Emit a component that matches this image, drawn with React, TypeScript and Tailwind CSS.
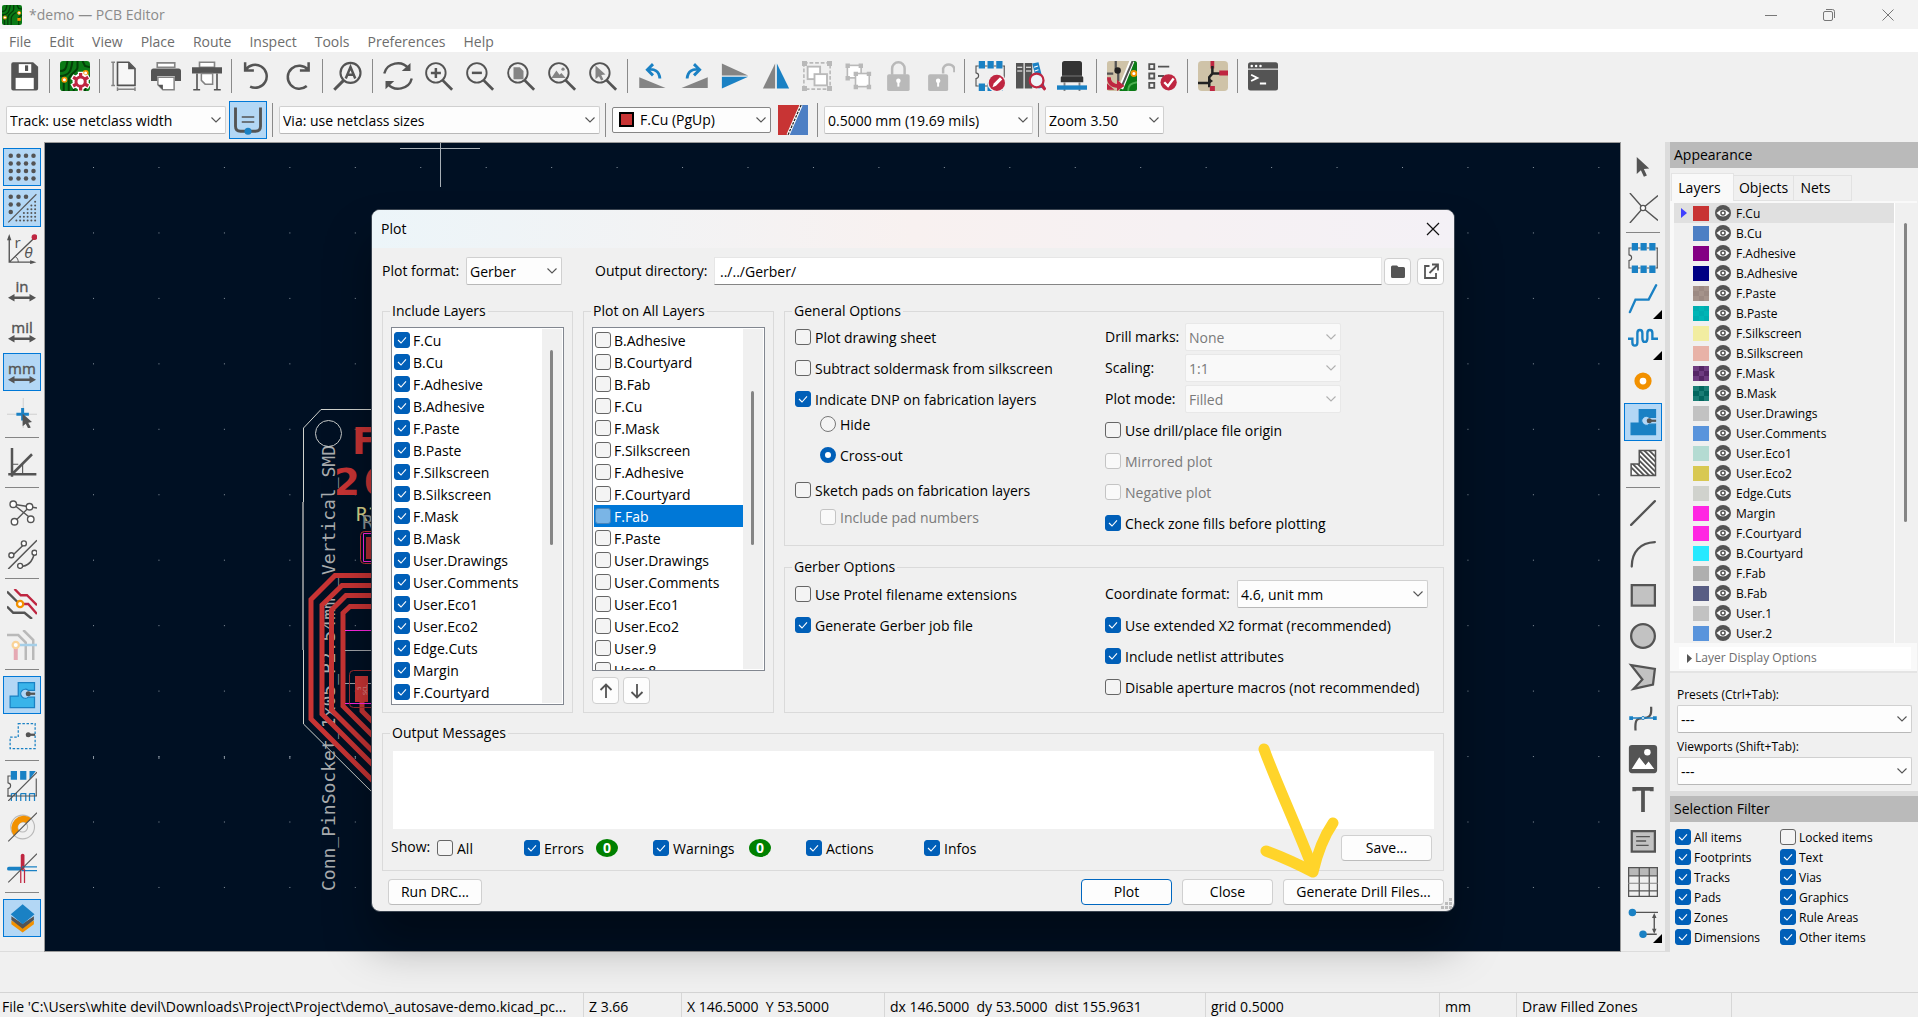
import React, { useId, useState } from "react";

const D = "#545454";
const G = "#848484";
const L = "#b9b9b9";
const B = "#1a81c4";
const R = "#bf2641";
const O = "#f29100";

/* ---------- shared controls ---------- */

function Icon({ children, size = "size-[30px]" }: { children: React.ReactNode; size?: string }) {
  return (
    <svg viewBox="0 0 24 24" className={`${size} shrink-0`} fill="none" aria-hidden="true">
      {children}
    </svg>
  );
}

function Chevron({ muted = false }: { muted?: boolean }) {
  return (
    <svg viewBox="0 0 10 6" className="pointer-events-none absolute top-1/2 right-[5px] h-[6px] w-[10px] -translate-y-1/2" aria-hidden="true">
      <path d="M0.5 0.5 5 5 9.5 0.5" fill="none" stroke={muted ? "#b0b0b0" : "#555"} strokeWidth="1.1" />
    </svg>
  );
}

function Combo({
  value,
  label,
  id,
  width = "w-full",
  swatch,
  disabled,
}: {
  value: string;
  label?: string;
  id?: string;
  width?: string;
  swatch?: boolean;
  disabled?: boolean;
}) {
  return (
    <span className={`relative inline-block shrink-0 ${width}`}>
      <select
        id={id}
        aria-label={label}
        disabled={disabled}
        className={`block w-full appearance-none rounded-[2px] border pr-6 text-[14px] leading-5 outline-none ${
          disabled ? "border-[#e8e8e8] bg-[#f9f9f9] text-[#7a7a7a] opacity-100" : swatch ? "border-[#868686] bg-[#fdfdfd] text-black" : "border-[#d0d0d0] border-b-[#b8b8b8] bg-[#fdfdfd] text-black"
        } ${swatch ? "h-[26px] pl-[27px]" : "h-[28px] pt-[2px] pl-[3px]"}`}
      >
        <option>{value}</option>
      </select>
      {swatch && <span className="pointer-events-none absolute top-[5px] left-[7px] size-[15px] border-2 border-black bg-[#c83434]" />}
      <Chevron muted={disabled} />
    </span>
  );
}

function Check({
  label,
  checked = false,
  disabled = false,
  selected = false,
  gap = "gap-[4px]",
  className = "",
}: {
  label: string;
  checked?: boolean;
  disabled?: boolean;
  selected?: boolean;
  gap?: string;
  className?: string;
}) {
  const tone = selected ? "border-[#4a86bd] bg-[#7ab5e6]" : disabled ? "border-[#c4c4c4] bg-[#f9f9f9]" : "border-[#666] bg-[#f4f4f4] checked:border-[#005fb8] checked:bg-[#005fb8]";
  return (
    <label className={`flex items-center whitespace-nowrap ${gap} ${disabled ? "text-[#7a7a7a]" : ""} ${className}`}>
      <span className="relative flex shrink-0">
        <input type="checkbox" defaultChecked={checked} disabled={disabled} className={`peer size-[16px] appearance-none rounded-[3px] border ${tone}`} />
        <svg viewBox="0 0 16 16" className="pointer-events-none absolute inset-0 hidden size-[16px] peer-checked:block" aria-hidden="true">
          <path d="M4 8 7 11 12 5.4" fill="none" stroke="#fff" strokeWidth="1.1" />
        </svg>
      </span>
      <span className="pt-[2px]">{label}</span>
    </label>
  );
}

function Radio({ label, checked, onSelect }: { label: string; checked: boolean; onSelect: () => void }) {
  return (
    <label className="flex h-[20px] items-center gap-[4px]">
      <input
        type="radio"
        name="dnp"
        checked={checked}
        onChange={onSelect}
        className={`size-[16px] appearance-none rounded-full ${checked ? "border-[5px] border-[#005fb8] bg-white" : "border border-[#777] bg-[#f4f4f4]"}`}
      />
      <span className="pt-[2px]">{label}</span>
    </label>
  );
}

function PushButton({ children, width, primary = false }: { children: React.ReactNode; width: string; primary?: boolean }) {
  return (
    <button
      type="button"
      className={`flex h-[26px] items-center justify-center rounded-[4px] border bg-[#fdfdfd] text-[14px] leading-5 ${width} ${primary ? "border-[#0067c0]" : "border-[#d0d0d0] border-b-[#bcbcbc]"}`}
    >
      {children}
    </button>
  );
}

/* ---------- icon drawings on a 24 unit grid ---------- */

const Footprint = () => (
  <>
    <path d="M3 4H.8v5.5C3.6 10 3.6 13.500 .8 14v6H3M23.400 4V20" stroke={D} strokeWidth=".9" />
    <path d="M3 0h5v6H3zM10 0h5v6h-5zM17 0h5v6h-5zM3 18h5v6H3zM10 18h5v6h-5zM17 18h5v6h-5z" fill={B} />
    <path d="M8 4h2M15 4h2M22 4h2M8 20h2M15 20h2M22 20h2" stroke={D} strokeWidth=".9" />
  </>
);

const Lens = () => (
  <>
    <circle cx="9.500" cy="9.500" r="7.800" stroke={D} strokeWidth="1.500" />
    <path d="M15 15.500 22.500 23" stroke={D} strokeWidth="2.200" />
  </>
);

const Circuit = () => (
  <>
    <rect x="0" y="0" width="24" height="24" rx="2.500" fill="#0b7a16" />
    <path d="M0 8c5 0 5-3 6-8M0 12c8 0 9-5 10-12M14 0v5c0 4-7 5-7 10v9M17 9c-4 2-6 4-6 8v7M24 12l-4 3v9M18 0l2 4 4 1M3 17v7" stroke="#043f08" strokeWidth="1.600" />
    <circle cx="3.500" cy="15" r="1.800" fill="#fff" stroke={O} strokeWidth="1.200" />
    <circle cx="20.500" cy="9.500" r="1.800" fill="#fff" stroke={O} strokeWidth="1.200" />
    <rect x="18.500" y="15.500" width="4" height="3.500" fill={O} />
  </>
);

const DoubleArrow = () => (
  <path d="M.8 18.200 6 15.200v2h12v-2l5.200 3-5.200 3v-2H6v2z" fill={D} />
);

const Unit = ({ text }: { text: string }) => (
  <>
    <text x="12" y="13.200" textAnchor="middle" fontSize="12" fontFamily="Open Sans, sans-serif" fill={D} stroke={D} strokeWidth=".3">
      {text}
    </text>
    <DoubleArrow />
  </>
);

const bigDots = [3, 9.200, 15.200, 21.200];
const Dot = ({ x, y, r = 1.800, c = D }: { x: number; y: number; r?: number; c?: string }) => <circle cx={x} cy={y} r={r} fill={c} />;

const PadLocks = ({ open = false }: { open?: boolean }) => (
  <>
    <rect x="2.500" y="10.500" width={open ? 16 : 18} height="13.500" rx="1.500" fill={L} />
    {open ? <path d="M14.500 10V6a4.800 4.800 0 0 1 9 0v3" stroke={L} strokeWidth="2" /> : <path d="M6.500 11V6a5 5 0 0 1 10 0v5" stroke={L} strokeWidth="2" />}
    <circle cx={open ? 10.500 : 11.500} cy="15.800" r="1.800" fill="#fff" />
    <path d={open ? "M10.500 16v4.500" : "M11.500 16v4.500"} stroke="#fff" strokeWidth="1.600" />
  </>
);

const Zone = ({ fill, stroke, dash }: { fill: string; stroke: string; dash?: boolean }) => (
  <>
    <path
      d={dash ? "M9 2h13.500v20H2.500V12.800H9z" : "M9 2h13v6.300h-5a3.600 3.600 0 1 0 0 5.400h5V22H2.500V12.800H9z"}
      fill={fill}
      stroke={stroke}
      strokeWidth="1"
      strokeDasharray={dash ? "2 1.300" : undefined}
    />
    <circle cx="17" cy="11" r="2" fill={D} />
    <path d="M17 11h5.500" stroke={D} strokeWidth="1.800" />
  </>
);

const icons: Record<string, React.ReactNode> = {
  save: (
    <>
      <path d="M2.500 1h16L22.500 4.500V22a1.500 1.500 0 0 1-1.500 1.500H2.500A1.500 1.500 0 0 1 1 22V2.500A1.500 1.500 0 0 1 2.500 1z" fill={D} />
      <path d="M7 2.500h10v7H7z" fill="#fff" />
      <path d="M12 3.500h2.500v4.500H12z" fill={D} />
      <path d="M4.500 13.500h14.500v9H4.500z" fill="#fff" />
    </>
  ),
  setup: (
    <>
      <Circuit />
      <path d="M16.500 8.500v16M9.500 12.500l14 8M9.500 20.500l14-8" stroke="#fff" strokeWidth="4.500" />
      <circle cx="16.500" cy="16.500" r="6.500" fill="#fff" />
      <path d="M16.500 9.500v3M16.500 20.500v3M10.500 13l2.600 1.500M20 18.500l2.600 1.500M10.500 20l2.600-1.500M20 14.500l2.600-1.500" stroke={R} strokeWidth="2.600" />
      <circle cx="16.500" cy="16.500" r="3.700" fill="#fff" stroke={R} strokeWidth="2.400" />
    </>
  ),
  page: (
    <>
      <path d="M6 1h9l5 5v13.500H6z" stroke={D} strokeWidth="1.300" fill="#f7f7f7" />
      <path d="M14.500 1v5.500H20z" fill={D} />
      <path d="M1 1h3M1 19.500h3M2.500 1v18.500M6 22.500h14M6 21v3M20 21v3" stroke={G} strokeWidth="1.200" />
    </>
  ),
  print: (
    <>
      <path d="M5 1.500h14v3.500H5z" stroke={G} strokeWidth="1.300" fill="#fff" />
      <path d="M0 8a2 2 0 0 1 2-2h20a2 2 0 0 1 2 2v8h-5v-4H5v4H0z" fill={D} />
      <path d="M5.500 13h13v10h-9l-4-4z" stroke={G} strokeWidth="1.200" fill="#fff" />
      <path d="M5.500 19h4v4z" fill={D} />
    </>
  ),
  plot: (
    <>
      <path d="M6 1h12v4H6z" stroke={G} strokeWidth="1.300" fill="#fff" />
      <path d="M0 5h24v5H0z" fill={D} />
      <path d="M4 10v13M20 10v13M1 23h5.500M17.500 23H23" stroke={D} strokeWidth="1.300" />
      <path d="M7.500 10h9v8.500h-6l-3-3z" stroke={G} strokeWidth="1.200" fill="#fff" />
    </>
  ),
  undo: <path d="M2.500 1v6.500h7M3 7a9.200 9.200 0 1 1 3.500 13.500" stroke={D} strokeWidth="2" />,
  redo: <path d="M20.500 1v6.500h-7M20 7a9.200 9.200 0 1 0-1 13" stroke={D} strokeWidth="2" />,
  find: (
    <>
      <circle cx="14" cy="9.500" r="8" stroke={D} strokeWidth="1.700" />
      <path d="M8.500 15.500 1 23" stroke={D} strokeWidth="2.400" />
      <path d="M10.200 14 14 4.800 17.800 14M11.500 11h5" stroke={D} strokeWidth="2" />
    </>
  ),
  refresh: (
    <>
      <path d="M1 10A11 10.500 0 0 1 20.500 6M23 14A11 10.500 0 0 1 3.500 18" stroke={D} strokeWidth="1.900" />
      <path d="M22 1.500V8h-7zM2 22.500V16h7z" fill={D} />
    </>
  ),
  zoomin: (
    <>
      <Lens />
      <path d="M9.500 5.500v8M5.500 9.500h8" stroke={D} strokeWidth="2" />
    </>
  ),
  zoomout: (
    <>
      <Lens />
      <path d="M5.500 9.500h8" stroke={D} strokeWidth="2" />
    </>
  ),
  zoompage: (
    <>
      <Lens />
      <path d="M6 5h5l3 3v6.500H6z" fill={G} />
    </>
  ),
  zoomobj: (
    <>
      <Lens />
      <path d="M3.500 13.500 7.500 7.500 10 11l1.500-1.500 3.500 4z" fill={G} />
      <circle cx="12.800" cy="6.500" r="1.300" fill={G} />
    </>
  ),
  zoomsel: (
    <>
      <Lens />
      <path d="M6 3.500v11l2.700-2.300 1.800 3.300 1.800-.8-1.700-3.500 3.400-.4z" fill={G} />
    </>
  ),
  rotl: (
    <>
      <path d="M1 13v8.500h21z" fill={G} />
      <path d="M8 7c5-1 9 1 9.500 7M12 2.500 7.500 7l4.500 4.500" stroke={B} strokeWidth="2.300" />
    </>
  ),
  rotr: (
    <>
      <path d="M23 13v8.500H2z" fill={G} />
      <path d="M16 7c-5-1-9 1-9.500 7M12 2.500 16.500 7 12 11.500" stroke={B} strokeWidth="2.300" />
    </>
  ),
  flipv: (
    <>
      <path d="M1.500 2v9.500h21z" fill={G} />
      <path d="M1.500 22v-9.500h21z" fill={B} />
    </>
  ),
  fliph: (
    <>
      <path d="M11.300 2v20H1.500z" fill={G} />
      <path d="M12.700 2v20h9.800z" fill={B} />
    </>
  ),
  group: (
    <>
      <rect x="1.500" y="1.500" width="21" height="21" stroke={L} strokeWidth="1.300" strokeDasharray="3 1.500" />
      <path d="M0 0h4v4H0zM20 0h4v4h-4zM0 20h4v4H0zM20 20h4v4h-4z" fill={L} />
      <rect x="4.500" y="4.500" width="10" height="10" fill="#fff" stroke={L} strokeWidth="1.500" />
      <rect x="10" y="10.500" width="10" height="9" fill="#fff" stroke={L} strokeWidth="1.500" />
    </>
  ),
  ungroup: (
    <>
      <rect x="3.500" y="3.500" width="11" height="10" stroke={L} strokeWidth="1.300" fill="#fff" />
      <rect x="10" y="10" width="11" height="10.500" stroke={L} strokeWidth="1.300" fill="#fff" />
      <path d="M2 2h3.500v3.500H2zM12.500 2H16v3.500h-3.500zM2 12h3.500v3.500H2zM8.500 8.500H12V12H8.500zM19 8.500h3.500V12H19zM8.500 19H12v3.500H8.500zM19 19h3.500v3.500H19z" fill={L} />
    </>
  ),
  lock: <PadLocks />,
  unlock: <PadLocks open />,
  fpedit: (
    <>
      <Footprint />
      <circle cx="17.500" cy="17.500" r="7.500" fill="#f0f0f0" />
      <circle cx="17.500" cy="17.500" r="6.500" fill={R} />
      <path d="m14 21 1-3 5-5 1.800 1.800-5 5z" fill="#fff" />
    </>
  ),
  fplib: (
    <>
      <path d="M0 1.500h6V22H0zM7 1.500h6V22H7z" fill={D} />
      <path d="m13 2 5-1 5 20-5 1z" fill={B} />
      <path d="M1 5h4M8 5h4M1 8h4M8 8h4M14.500 5l3-1M15 8l3-1" stroke="#fff" strokeWidth=".9" />
      <circle cx="16.500" cy="15.500" r="5.500" fill="#eef3f8" stroke={R} strokeWidth="1.800" />
      <path d="m20.500 19.500 3 3.500" stroke={R} strokeWidth="2.500" />
    </>
  ),
  viewer3d: (
    <>
      <path d="M4 2a2 2 0 0 1 2-2h12a2 2 0 0 1 2 2v10l1 1v4H3v-4l1-1z" fill="#333" />
      <path d="M4 12h16" stroke="#777" strokeWidth=".8" />
      <path d="M6 17v7M18 17v7" stroke={G} strokeWidth="1.500" />
      <path d="M0 19.500h24v3.500H0z" fill={B} />
    </>
  ),
  update: (
    <>
      <rect width="24" height="24" rx="2" fill="#cfc3a8" />
      <path d="M20 0h2a2 2 0 0 1 2 2v20a2 2 0 0 1-2 2H10z" fill="#0b7a16" />
      <path d="M7 0v6l2 3v7M0 10h5" stroke={D} strokeWidth="1.800" />
      <circle cx="8.500" cy="7.500" r="2.600" fill="#222" />
      <path d="M20 0 11 22" stroke="#fff" strokeWidth="4" />
      <path d="M20.500 0 12 20" stroke={D} strokeWidth="1.600" />
      <path d="M17 24c0-5 2-6 7-7" stroke="#4caf50" strokeWidth="1.500" />
      <circle cx="21.500" cy="10" r="2" fill="#fff" stroke={O} strokeWidth="1.500" />
      <path d="M1.500 13c0 5 3 7 8 7" stroke={R} strokeWidth="3" />
      <path d="m8 15 6 5-6 4zM0 18l6 5H0z" fill={R} />
    </>
  ),
  drc: (
    <>
      <path d="M1 2.500h4v4H1zM1 10h4v4H1zM1 17.500h4v4H1zM8 4.500h9M8 12h5" stroke={D} strokeWidth="1.500" />
      <circle cx="16.500" cy="17" r="6.500" fill={R} />
      <path d="m13 17 3 3 4.500-6" stroke="#fff" strokeWidth="1.900" />
    </>
  ),
  schematic: (
    <>
      <rect width="24" height="24" rx="3" fill="#cfc3a8" />
      <path d="M11.500 0v6" stroke={R} strokeWidth="3" />
      <path d="M11.500 4v7M11 10h7M12 9.500 9 13v8M0 17.500h9" stroke="#222" strokeWidth="2" />
      <path d="M17 9.500h7M11.500 20v4" stroke={R} strokeWidth="4" />
      <path d="m8 13 4 3-4 3z" fill="#222" />
    </>
  ),
  console: (
    <>
      <rect x="0" y="1" width="24" height="22.500" rx="2" fill={D} />
      <path d="M0 6.500h24" stroke="#fff" strokeWidth=".8" />
      <circle cx="3" cy="4" r="1" fill="#fff" />
      <circle cx="6.500" cy="4" r="1" fill="#fff" />
      <circle cx="10" cy="4" r="1" fill="#fff" />
      <path d="m2.500 11 5 2.500-5 2.500M9.500 18h5" stroke="#fff" strokeWidth="1.500" />
    </>
  ),
  autotrack: (
    <>
      <path d="M2 2v15q0 4 4 4h12q4 0 4-4V2" stroke={D} strokeWidth="2.300" />
      <path d="M7 9.500h10M7 13.500h10" stroke={D} strokeWidth="1.200" />
      <circle cx="12" cy="21" r="2.800" fill={B} />
    </>
  ),
  grid: <>{bigDots.map((y) => bigDots.map((x) => <Dot key={`${x}-${y}`} x={x} y={y} />))}</>,
  gridoverride: (
    <>
      <Dot x={3} y={3} />
      <Dot x={9.200} y={3} />
      <Dot x={15.200} y={3} />
      <Dot x={3} y={9.200} />
      <Dot x={9.200} y={9.200} />
      <Dot x={3} y={15.200} />
      {[0, 1, 2, 3, 4, 5].map((row) =>
        Array.from({ length: row + 1 }, (_, k) => <Dot key={`${row}-${k}`} x={22.500 - k * 3} y={7 + row * 3} r={0.800} />)
      )}
      <path d="M1 23.500 23.500 1" stroke={D} strokeWidth=".9" />
    </>
  ),
  polar: (
    <>
      <path d="M1.800 23V3M1.800 22.500H21M1.800 22.500 22 3" stroke={D} strokeWidth="1.100" />
      <path d="M1.800 0 3.500 5H0zM23.500 22.500l-5 1.600v-3.200z" fill={D} />
      <circle cx="22" cy="2.500" r="2.300" fill={R} />
      <path d="M6.500 18c2 1 2.500 3 2.500 4.500" stroke={D} strokeWidth=".8" />
      <text x="6" y="11" fontSize="12" fontFamily="Open Sans, sans-serif" fill={D}>r</text>
      <text x="14" y="19.500" fontSize="11" fontStyle="italic" fontFamily="DejaVu Sans, sans-serif" fill={D}>θ</text>
    </>
  ),
  in: <Unit text="in" />,
  mil: <Unit text="mil" />,
  mm: <Unit text="mm" />,
  crosshair: (
    <>
      <path d="M13 0v24M0 13h24" stroke="#cfcfcf" strokeWidth=".8" />
      <path d="M12.500 8v10M7.500 13h10" stroke={B} strokeWidth="2.400" />
      <path d="M12.500 12.500v10l2.500-2 2 4 2-1-2-3.800 3-.5z" fill={D} />
    </>
  ),
  angle: (
    <>
      <path d="M4 0v23M1 21h22.500M3 22 20 5" stroke={D} strokeWidth="2" />
      <path d="M4 13h5M12.500 13v8" stroke={D} strokeWidth=".9" />
    </>
  ),
  ratsnest: (
    <>
      <path d="M5 5 20 17M5 5l13 2 6 1M6 19 18 7" stroke={D} strokeWidth="1.100" />
      {[[5, 5], [18, 7], [6, 19], [19, 17]].map(([x, y]) => (
        <circle key={`${x}${y}`} cx={x} cy={y} r="2.600" fill="#fff" stroke={D} strokeWidth="1.100" />
      ))}
    </>
  ),
  ratsnestarc: (
    <>
      <path d="M1 24 24 1M3.500 14 14 4M10.500 22c6 0 10-4 11.500-11" stroke={D} strokeWidth="1.200" />
      {[[3.500, 13], [13.500, 3.500], [10.500, 21.500], [22, 11]].map(([x, y]) => (
        <circle key={`${x}${y}`} cx={x} cy={y} r="2" fill="#fff" stroke={D} strokeWidth="1.100" />
      ))}
    </>
  ),
  nets: (
    <>
      <path d="M0 2 10 12M0 14l5 5h9l6 5" stroke={D} strokeWidth="1.900" />
      <path d="M6 0l5 5h5l8 8M11 12h6l7 8" stroke={R} strokeWidth="1.900" />
      <circle cx="10.500" cy="12" r="2.500" fill="#fff" stroke={O} strokeWidth="1.800" />
    </>
  ),
  highlight: (
    <>
      <path d="M0 4h9l6 6v14M13 0l8 8v16" stroke={L} strokeWidth="2" />
      <path d="M8 12h16" stroke="#a5cfe8" strokeWidth="2" />
      <path d="M7 13v11" stroke="#e5a8b3" strokeWidth="3.200" />
      <circle cx="7" cy="12" r="2.500" fill="#fff" stroke="#fad398" strokeWidth="1.800" />
    </>
  ),
  zonefill: <Zone fill="#39b4ea" stroke={B} />,
  zoneoutline: <Zone fill="none" stroke={B} dash />,
  fpsketch: (
    <>
      <path d="M3 4H.8v5.500C3.600 10 3.600 13.500.8 14v6H3M23.400 6v14" stroke={D} strokeWidth=".9" />
      <path d="M3 0h5v7H3zM10.500 0h5v7h-5zM18 0h5l-5 7z" fill={B} />
      <path d="M3.500 18h4v6M3.500 18v6M11 18h4v6M11 18v6M18 18h4v6M18 18v6" stroke={B} strokeWidth="1" />
      <path d="M0 20h24M1 24 24 1" stroke={D} strokeWidth=".9" />
    </>
  ),
  viasketch: (
    <>
      <circle cx="12.500" cy="12" r="9.500" stroke={L} strokeWidth=".9" />
      <circle cx="12.500" cy="12" r="4" stroke={L} strokeWidth=".9" />
      <path d="M5.500 19A10 10 0 0 1 19.500 5l-4 4a4.300 4.300 0 0 0-6 6z" fill={O} />
      <path d="M1 23.500 24 .5" stroke={D} strokeWidth=".9" />
    </>
  ),
  tracksketch: (
    <>
      <path d="M1.500 12.500h10" stroke={B} strokeWidth="3" strokeLinecap="round" />
      <path d="M12.500 2v10" stroke={R} strokeWidth="3" strokeLinecap="round" />
      <path d="M12 11h12M12 14h12" stroke={B} strokeWidth="1" />
      <path d="M11 13v11M14 13v11" stroke={R} strokeWidth="1" />
      <path d="M1 23.500 24 .5" stroke={D} strokeWidth=".9" />
    </>
  ),
  layers: (
    <>
      <path d="m3.500 14 9 5 9-5v3l-9 6.500-9-6.500z" fill={O} />
      <path d="m3.500 10.500 9 6 9-6v3l-9 7-9-7z" fill={D} />
      <path d="M12.500 1 22 9l-9.500 8L3 9z" fill={B} />
    </>
  ),
  pointer: <path d="M7 4v13.500l3.300-3 2.400 5.300 2.400-1-2.400-5.200 4.300-.5z" fill={D} />,
  localrats: (
    <>
      <path d="M1.500 0 12 12 1.500 24M24 2 12 12l12 10" stroke={D} strokeWidth="1.100" />
      <circle cx="12" cy="12" r="2.100" fill="#fff" stroke={D} strokeWidth="1" />
    </>
  ),
  footprint: <Footprint />,
  route: <path d="M1.500 22.500 6 12.500h10.500L22.500 1" stroke={B} strokeWidth="1.900" strokeLinecap="round" />,
  tune: <path d="M0 11h3.500v3q0 2.500 2 2.500t2-2.500V6.500q0-2.500 2-2.500t2 2.500v4q0 3 2 3t2-3v-4q0-2.500 2-2.500t2 2.500V11H24" stroke={B} strokeWidth="1.900" />,
  via: <circle cx="12" cy="12" r="4.800" fill="#fff" stroke={O} strokeWidth="4.200" />,
  zone: <Zone fill={B} stroke={B} />,
  keepout: (
    <>
      <clipPath id="keepout-shape">
        <path d="M9 2h13v20H2.500V12.800H9z" />
      </clipPath>
      <g clipPath="url(#keepout-shape)">
        <path d="M2.500 2h20v20h-20z" fill="#fff" />
        <path d="M0-3 26 23M0 1l26 26M0 5l26 26M0 9l20 20M0 13l20 20M0-7l26 26M0-11l26 26M0-15l26 26" stroke={D} strokeWidth="1.500" />
      </g>
      <path d="M9 2h13v20H2.500V12.800H9z" stroke={D} strokeWidth="1.200" />
    </>
  ),
  line: <path d="M2.500 21.500 21.500 2.500" stroke={D} strokeWidth="1.800" strokeLinecap="round" />,
  arc: <path d="M3 22C3 10 10 3 21.500 2.500" stroke={D} strokeWidth="1.800" strokeLinecap="round" />,
  rect: <path d="M3 4h18.500v16.500H3z" stroke={D} strokeWidth="1.800" fill="#c2c2c2" />,
  circle: <circle cx="12" cy="12" r="9.500" stroke={D} strokeWidth="1.800" fill="#c2c2c2" />,
  poly: <path d="M2.500 2.500 21.500 5.500 20 18 4.500 21.500 11.500 14z" stroke={D} strokeWidth="1.800" fill="#c2c2c2" />,
  bezier: (
    <>
      <path d="M6 22c-.5-8 .5-10 6-10s7-2 6.500-9" stroke={D} strokeWidth="1.800" />
      <path d="M2 12h20" stroke={B} strokeWidth="1.200" />
      <path d="M1 10.500h3v3H1zM20 10.500h3v3h-3z" fill={B} />
      <circle cx="12" cy="12" r="1.200" fill="#fff" stroke={B} strokeWidth=".8" />
    </>
  ),
  image: (
    <>
      <rect x=".7" y=".7" width="22.600" height="22.600" rx="2.500" fill={D} />
      <path d="m3 20 6-9.500L14 17l2.500-3L21 20z" fill="#fff" />
      <circle cx="15.500" cy="6.500" r="2.600" fill="#fff" />
    </>
  ),
  text: <path d="M5 5V3h14v2M12 3v18.500" stroke={D} strokeWidth="3" />,
  textbox: (
    <>
      <path d="M3 4h18.500v16.500H3z" stroke={D} strokeWidth="1.800" fill="#c2c2c2" />
      <path d="M6.500 8.500h11M6.500 12h8M6.500 15.500h10" stroke={D} strokeWidth="1.100" />
    </>
  ),
  table: (
    <>
      <path d="M0 0h24v7H0z" fill={L} />
      <path d="M.5.5h23v23H.5zM0 7h24M0 19h24M9 0v24M17 0v24" stroke={D} strokeWidth="1" />
      <path d="M0 13h24" stroke={G} strokeWidth=".8" />
    </>
  ),
  dimension: (
    <>
      <path d="M4 3.500h20M12 21h11M21 7v12" stroke={D} strokeWidth="1.100" />
      <path d="m21 4 1.800 4h-3.600zM21 20.500l1.800-4h-3.600z" fill={D} />
      <circle cx="3.500" cy="3.500" r="3" fill={B} />
      <circle cx="12" cy="21" r="3" fill={B} />
    </>
  ),
};

/* ---------- toolbars ---------- */

function ToolButton({ name, active = false, flyout = false, size = "size-[41px]" }: { name: string; active?: boolean; flyout?: boolean; size?: string }) {
  return (
    <span className={`relative flex shrink-0 items-center justify-center ${size}`}>
      <button
        type="button"
        aria-label={name}
        className={`flex size-[38px] items-center justify-center ${active ? "border border-[#0078d7] bg-[#b3d7f5]" : ""}`}
      >
        <Icon>{icons[name]}</Icon>
      </button>
      {flyout && (
        <svg viewBox="0 0 9 9" className="pointer-events-none absolute right-[2px] bottom-0 size-[9px]" aria-hidden="true">
          <path d="M9 0v9H0z" fill="#000" />
        </svg>
      )}
    </span>
  );
}

const topTools = "save | setup | page print plot | undo redo | find | refresh zoomin zoomout zoompage zoomobj zoomsel | rotl rotr flipv fliph group ungroup lock unlock | fpedit fplib viewer3d | update drc | schematic | console".split(" ");
const leftTools = "grid! gridoverride! polar in mil mm! crosshair | angle | ratsnest ratsnestarc | nets highlight | zonefill! zoneoutline | fpsketch viasketch tracksketch | layers!".split(" ");
const rightTools = "pointer localrats | footprint route^ tune^ via zone! keepout | line arc rect circle poly bezier image text textbox table dimension^".split(" ");

function TopToolbar() {
  return (
    <div role="toolbar" aria-label="Main" className="flex h-12 items-center pl-1">
      {topTools.map((t, i) =>
        t === "|" ? (
          <span key={i} className="flex w-[9px] shrink-0 justify-center">
            <span className="h-[34px] w-px bg-[#8a8a8a]" />
          </span>
        ) : (
          <ToolButton key={i} name={t} />
        )
      )}
    </div>
  );
}

function SideToolbar({ tools, label }: { tools: string[]; label: string }) {
  return (
    <div role="toolbar" aria-label={label} className="flex w-[44px] shrink-0 flex-col items-center border-b border-[#dcdcdc] pt-1">
      {tools.map((t, i) =>
        t === "|" ? (
          <span key={i} className="flex h-[9px] shrink-0 items-center">
            <span className="h-px w-[34px] bg-[#858585]" />
          </span>
        ) : (
          <ToolButton key={i} name={t.replace(/[!^]/, "")} active={t.endsWith("!")} flyout={t.endsWith("^")} />
        )
      )}
    </div>
  );
}

const VSep = () => <span className="mr-[6px] ml-[5px] h-[34px] w-px shrink-0 bg-[#8a8a8a]" />;

function OptionsToolbar() {
  return (
    <div role="toolbar" aria-label="Options" className="flex h-[42px] items-center pb-[2px] pl-[6px]">
      <Combo value="Track: use netclass width" label="Track width" width="w-[220px]" />
      <ToolButton name="autotrack" active size="ml-[3px] size-[38px]" />
      <VSep />
      <Combo value="Via: use netclass sizes" label="Via size" width="w-[321px]" />
      <VSep />
      <Combo value="F.Cu (PgUp)" label="Active layer" width="w-[159px]" swatch />
      <button type="button" aria-label="Layer pair" className="mr-[4px] ml-[7px] size-[30px] shrink-0">
        <Icon>
          <path d="M0 0h24v24H0z" fill="#4d7fc4" />
          <path d="M0 0h18.500L8 24H0z" fill="#c83434" />
          <path d="M18.500 0 8 24" stroke="#fff" strokeWidth="2.500" />
          <path d="M18.500 0 8 24" stroke="#222" strokeWidth="1" strokeDasharray="2 1" />
        </Icon>
      </button>
      <VSep />
      <Combo value="0.5000 mm (19.69 mils)" label="Grid" width="w-[209px]" />
      <VSep />
      <Combo value="Zoom 3.50" label="Zoom" width="w-[119px]" />
    </div>
  );
}

/* ---------- board canvas ---------- */

function BoardCanvas() {
  return (
    <main className="min-w-0 flex-1 overflow-hidden border border-[#9a9a9a] bg-[#001023]">
      <svg className="block size-full" aria-label="Board">
        <defs>
          <pattern id="dots" width="65.450" height="65.450" patternUnits="userSpaceOnUse" x="48" y="24">
            <rect width="1" height="1" fill="#8a95a0" />
          </pattern>
        </defs>
        <rect width="100%" height="100%" fill="url(#dots)" />
        <g transform="translate(-45 -143)" fill="none">
          <path d="M440.500 143v44M400 148.500h80" stroke="#a7afb6" />
          {[0, 1, 2, 3, 4].map((k) => (
            <path key={k} d={`M${93.500 + k * 65.450} 756v3`} stroke="#8a95a0" />
          ))}
          <path d="M380 409.500h-59L303.500 428v74M303.500 650v74L380 800" stroke="#d0d2cd" />
          <path d="M303 502v148" stroke="#7e8388" strokeWidth="2" />
          <g fill="#a9acae" fontFamily="DejaVu Sans Mono, monospace" fontSize="18">
            <text transform="translate(335 891) rotate(-90)">Conn_PinSocket</text>
            <text transform="translate(335 739) rotate(-90)">_1x05_P2.54mm</text>
            <text transform="translate(335 445) rotate(-90)" textAnchor="end">_Vertical_SMD</text>
          </g>
          <g stroke="#c83434" strokeWidth="5">
            <path d="M380 575.500h-45L311 599.500V719l69 69M380 585.500h-38L322 605v109l60 60M380 595.500h-34L331.500 610v100l50 50M380 606.500h-30L343 613v93l40 40M362 690v21l20 20" />
          </g>
          <circle cx="328.500" cy="433.500" r="13" stroke="#c8cac8" />
          <g fill="#c83434" fontFamily="DejaVu Sans, sans-serif" fontWeight="700" fontSize="37">
            <text x="352" y="454">F</text>
            <text x="334" y="495">2</text>
            <text x="364" y="495">0</text>
          </g>
          <g fontFamily="DejaVu Sans Mono, monospace" fontSize="19">
            <text x="356" y="521" fill="#d8d48a">R1</text>
            <text x="362" y="529" fill="#8f9396">R</text>
          </g>
          <rect x="360.500" y="531.500" width="30" height="32" rx="4" stroke="#c83434" />
          <path d="M380 533.500h-16.500v28H380" stroke="#ff26e2" />
          <rect x="366" y="537" width="20" height="22" fill="#b02e30" />
          <path d="M345 630.500h35M345 703.500h35" stroke="#ff26e2" />
          <path d="M345 650.500h35M345 683.500h35" stroke="#a0a4a8" />
          <rect x="349.500" y="670.500" width="30" height="37" rx="4" stroke="#a02c30" />
          <rect x="355" y="676" width="13" height="26" fill="#c83434" />
          <text transform="translate(367 695) rotate(-90)" fontSize="6" fontFamily="Open Sans, sans-serif" fill="#e2a0a0">SCL</text>
          <text transform="translate(361 690) rotate(-90)" fontSize="6" fontFamily="Open Sans, sans-serif" fill="#e2a0a0">5</text>
        </g>
      </svg>
    </main>
  );
}

/* ---------- appearance panel ---------- */

const layers: [string, string, string?][] = [
  ["F.Cu", "#c83434"],
  ["B.Cu", "#4d7fc4"],
  ["F.Adhesive", "#840084"],
  ["B.Adhesive", "#000084"],
  ["F.Paste", "#a5938b", "#9c8a83"],
  ["B.Paste", "#00adb0", "#00b5b5"],
  ["F.Silkscreen", "#f2eda1"],
  ["B.Silkscreen", "#e8b2a7"],
  ["F.Mask", "#6e3c80", "#552665"],
  ["B.Mask", "#1a7d75", "#02665e"],
  ["User.Drawings", "#c2c2c2"],
  ["User.Comments", "#5994dc"],
  ["User.Eco1", "#b4dbd2"],
  ["User.Eco2", "#d8c852"],
  ["Edge.Cuts", "#d0d2cd"],
  ["Margin", "#ff26e2"],
  ["F.Courtyard", "#ff26e2"],
  ["B.Courtyard", "#26e9ff"],
  ["F.Fab", "#afafaf"],
  ["B.Fab", "#585d84"],
  ["User.1", "#c2c2c2"],
  ["User.2", "#5994dc"],
];

function LayerRow({ name, color, alt, active }: { name: string; color: string; alt?: string; active: boolean }) {
  return (
    <li className={`flex h-5 items-center pl-[7px] ${active ? "bg-[#e0e0e0]" : ""}`}>
      <svg viewBox="0 0 6 10" className="mr-[6px] h-[10px] w-[6px]" aria-hidden="true">
        {active && <path d="M0 0v10l6-5z" fill="#4040ff" />}
      </svg>
      <svg viewBox="0 0 16 15" className="mr-[6px] h-[15px] w-[16px]" aria-hidden="true">
        <path d="M0 0h16v15H0z" fill={color} />
        {alt && <path d="M6 0h5v5H6zM0 5h6v5H0zM11 5h5v5h-5zM6 10h5v5H6z" fill={alt} />}
      </svg>
      <svg viewBox="0 0 16 16" className="mr-[5px] size-[16px]" aria-hidden="true">
        <circle cx="8" cy="8" r="8" fill={D} />
        <path d="M1.500 8Q8 1 14.500 8 8 15 1.500 8z" fill="#fff" />
        <circle cx="8" cy="8" r="2.800" fill={D} />
        <circle cx="8" cy="8" r="1.300" fill="#fff" />
      </svg>
      <span className="pt-[2px]">{name}</span>
    </li>
  );
}

const filters: [string, boolean][] = [
  ["All items", true],
  ["Locked items", false],
  ["Footprints", true],
  ["Text", true],
  ["Tracks", true],
  ["Vias", true],
  ["Pads", true],
  ["Graphics", true],
  ["Zones", true],
  ["Rule Areas", true],
  ["Dimensions", true],
  ["Other items", true],
];

function AppearancePanel() {
  return (
    <aside className="flex w-[253px] shrink-0 flex-col border-l-[5px] border-[#dcdcdc] text-[12px] leading-5">
      <h2 className="h-[26px] shrink-0 bg-[#bababa] pl-[4px] text-[14px] leading-[26px]">Appearance</h2>
      <div role="tablist" className="flex h-[33px] shrink-0 items-end pt-[5px] pl-px text-[14px]">
        <button type="button" role="tab" aria-selected="true" className="h-full w-[63px] border border-b-0 border-[#e4e4e4] bg-[#f9f9f9] pr-[6px]">Layers</button>
        <button type="button" role="tab" className="h-[26px] w-[60px] border border-l-0 border-[#e2e2e2]">Objects</button>
        <button type="button" role="tab" className="h-[26px] w-[58px] border border-l-0 border-[#e2e2e2] pr-[14px]">Nets</button>
      </div>
      <div className="mr-px shrink-0 border-b-2 border-[#e4e4e4] bg-[#f9f9f9] pt-[2px] pb-[2px] pl-[4px]">
        <div className="flex bg-[#f0f0f0]">
          <ul className="w-[221px] border-r border-white">
            {layers.map(([name, color, alt], i) => (
              <LayerRow key={name} name={name} color={color} alt={alt} active={i === 0} />
            ))}
          </ul>
          <span className="mt-[20px] ml-[9px] h-[299px] w-[3px] rounded bg-[#858585]" />
        </div>
        <button type="button" className="mt-[4px] ml-[5px] flex h-[22px] w-[232px] items-center gap-[3px] bg-white pl-[8px] text-[#6d6d6d]">
          <svg viewBox="0 0 5 9" className="h-[9px] w-[5px]" aria-hidden="true">
            <path d="M0 0v9l5-4.500z" fill="#555" />
          </svg>
          Layer Display Options
        </button>
      </div>
      <div className="flex flex-col pt-[12px] pr-[6px] pl-[7px]">
        <label htmlFor="presets">Presets (Ctrl+Tab):</label>
        <Combo id="presets" value="---" />
        <label htmlFor="viewports" className="mt-[4px]">Viewports (Shift+Tab):</label>
        <Combo id="viewports" value="---" />
      </div>
      <div className="mt-[6px] h-[5px] shrink-0 bg-[#dcdcdc]" />
      <h2 className="h-[26px] shrink-0 bg-[#bababa] pl-[4px] text-[14px] leading-[26px]">Selection Filter</h2>
      <div className="grid grid-cols-[105px_1fr] pt-[5px] pl-[5px]">
        {filters.map(([name, on]) => (
          <Check key={name} label={name} checked={on} gap="gap-[3px]" className="h-5" />
        ))}
      </div>
    </aside>
  );
}

/* ---------- plot dialog ---------- */

const included = ["F.Cu", "B.Cu", "F.Adhesive", "B.Adhesive", "F.Paste", "B.Paste", "F.Silkscreen", "B.Silkscreen", "F.Mask", "B.Mask", "User.Drawings", "User.Comments", "User.Eco1", "User.Eco2", "Edge.Cuts", "Margin", "F.Courtyard"];
const onAll = ["B.Adhesive", "B.Courtyard", "B.Fab", "F.Cu", "F.Mask", "F.Silkscreen", "F.Adhesive", "F.Courtyard", "F.Fab", "F.Paste", "User.Drawings", "User.Comments", "User.Eco1", "User.Eco2", "User.9", "User.8"];

function Group({ title, className = "", children }: { title: string; className?: string; children: React.ReactNode }) {
  return (
    <fieldset className={`border border-[#dadada] px-[8px] ${className}`}>
      <legend className="-ml-px px-[2px] leading-5">{title}</legend>
      {children}
    </fieldset>
  );
}

function LayerList({ items, checked, selected, height, thumb }: { items: string[]; checked: boolean; selected?: string; height: string; thumb: string }) {
  return (
    <div className={`mt-[6px] flex overflow-hidden border border-[#828790] bg-white ${height}`}>
      <ul className="min-w-0 flex-1 pt-px pl-px">
        {items.map((name) => (
          <li key={name} className={`flex h-[22px] items-center pl-px ${name === selected ? "bg-[#0078d7] text-white" : ""}`}>
            <Check label={name} checked={checked} selected={name === selected} gap="gap-[3px]" />
          </li>
        ))}
      </ul>
      <span className="my-px mr-px flex w-[20px] bg-[#f0f0f0] pl-[8px]">
        <span className={`w-[3px] rounded bg-[#858585] ${thumb}`} />
      </span>
    </div>
  );
}

function Field({ label, value }: { label: string; value: string }) {
  const id = useId();
  return (
    <div className="flex h-[31px] items-center">
      <label htmlFor={id} className="w-[80px]">{label}</label>
      <Combo id={id} value={value} width="w-[156px]" disabled />
    </div>
  );
}

function DnpChoice() {
  const [mode, setMode] = useState("Cross-out");
  return (
    <div className="flex flex-col gap-[11px] pl-[25px]">
      {["Hide", "Cross-out"].map((m) => (
        <Radio key={m} label={m} checked={mode === m} onSelect={() => setMode(m)} />
      ))}
    </div>
  );
}

function SquareButton({ label, children }: { label: string; children: React.ReactNode }) {
  return (
    <button type="button" aria-label={label} className="flex size-[27px] shrink-0 items-center justify-center rounded-[4px] border border-[#d0d0d0] bg-[#fdfdfd]">
      {children}
    </button>
  );
}

const Badge = () => (
  <span className="flex h-[18px] w-[22px] items-center justify-center rounded-[50%] bg-[#008000] text-[14px] leading-none font-bold text-white">0</span>
);

function PlotDialog() {
  return (
    <div
      role="dialog"
      aria-label="Plot"
      className="absolute top-[209px] left-[371px] w-[1084px] overflow-visible rounded-[9px] border border-[#3a4450] bg-[#f0f0f0] shadow-[0_32px_46px_rgba(0,0,0,0.34)]"
    >
      <div className="flex h-[38px] items-center justify-between rounded-t-[8px] bg-linear-to-r from-[#ecf5f9] via-[#f8f1f0] to-[#f4f1f6] pr-[14px] pl-[9px]">
        <span>Plot</span>
        <button type="button" aria-label="Close dialog">
          <svg viewBox="0 0 14 14" className="size-[14px]" aria-hidden="true">
            <path d="m1 1 12 12M13 1 1 13" stroke="#111" strokeWidth="1.200" />
          </svg>
        </button>
      </div>
      <div className="flex flex-col px-[10px] pt-[9px] pb-[6px]">
        <div className="flex items-center">
          <label htmlFor="format" className="w-[84px] pb-px">Plot format:</label>
          <Combo id="format" value="Gerber" width="w-[96px]" />
          <label htmlFor="outdir" className="ml-[33px] w-[119px] pb-px">Output directory:</label>
          <input id="outdir" defaultValue="../../Gerber/" className="h-[28px] min-w-0 flex-1 border border-[#e6e6e6] border-b-[#858585] bg-white px-[5px] outline-none" />
          <span className="ml-[2px] flex gap-[6px]">
            <SquareButton label="Browse">
              <svg viewBox="0 0 14 13" className="h-[13px] w-[14px]" aria-hidden="true">
                <path d="M0 2a1.500 1.500 0 0 1 1.500-1.500H6L7.500 2h5A1.500 1.500 0 0 1 14 3.500v8a1.500 1.500 0 0 1-1.500 1.500h-11A1.500 1.500 0 0 1 0 11.500z" fill={D} />
              </svg>
            </SquareButton>
            <SquareButton label="Open directory">
              <svg viewBox="0 0 16 16" className="size-[16px]" fill="none" stroke={D} strokeWidth="1.800" aria-hidden="true">
                <path d="M6.500 3H2v12h11v-5M9 1.500h6v6M15 1.500 6.500 10" />
              </svg>
            </SquareButton>
          </span>
        </div>

        <div className="mt-[16px] flex gap-[10px]">
          <Group title="Include Layers" className="w-[191px] shrink-0 pb-[7px]">
            <LayerList items={included} checked height="h-[378px]" thumb="mt-[21px] h-[195px]" />
          </Group>
          <Group title="Plot on All Layers" className="w-[191px] shrink-0">
            <LayerList items={onAll} checked={false} selected="F.Fab" height="h-[344px]" thumb="mt-[62px] h-[154px]" />
            <div className="mt-[6px] flex gap-[4px]">
              <SquareButton label="Move up">
                <svg viewBox="0 0 14 16" className="h-[16px] w-[14px]" fill="none" stroke={D} strokeWidth="1.800" aria-hidden="true">
                  <path d="M7 15V1.500M1.500 7 7 1.500 12.500 7" />
                </svg>
              </SquareButton>
              <SquareButton label="Move down">
                <svg viewBox="0 0 14 16" className="h-[16px] w-[14px]" fill="none" stroke={D} strokeWidth="1.800" aria-hidden="true">
                  <path d="M7 1v13.500M1.500 9 7 14.500 12.500 9" />
                </svg>
              </SquareButton>
            </div>
          </Group>
          <div className="flex flex-1 flex-col gap-[11px]">
            <Group title="General Options" className="pb-[7px]">
              <div className="grid grid-cols-[310px_1fr] pl-[2px]">
                <div className="flex flex-col">
                  <Check label="Plot drawing sheet" className="h-[31px]" />
                  <Check label="Subtract soldermask from silkscreen" className="h-[31px]" />
                  <Check label="Indicate DNP on fabrication layers" checked className="h-[31px]" />
                  <DnpChoice />
                  <Check label="Sketch pads on fabrication layers" className="mt-[9px] h-[31px]" />
                  <Check label="Include pad numbers" disabled className="h-[24px] pl-[25px]" />
                </div>
                <div className="flex flex-col">
                  <Field label="Drill marks:" value="None" />
                  <Field label="Scaling:" value="1:1" />
                  <Field label="Plot mode:" value="Filled" />
                  <Check label="Use drill/place file origin" className="h-[31px]" />
                  <Check label="Mirrored plot" disabled className="h-[31px]" />
                  <Check label="Negative plot" disabled className="h-[31px]" />
                  <Check label="Check zone fills before plotting" checked className="h-[31px]" />
                </div>
              </div>
            </Group>
            <Group title="Gerber Options" className="flex-1">
              <div className="grid grid-cols-[310px_1fr] pt-px pl-[2px]">
                <div>
                  <Check label="Use Protel filename extensions" className="h-[31px]" />
                  <Check label="Generate Gerber job file" checked className="h-[31px]" />
                </div>
                <div>
                  <div className="flex h-[31px] items-center">
                    <label htmlFor="coord" className="w-[132px] whitespace-nowrap">Coordinate format:</label>
                    <Combo id="coord" value="4.6, unit mm" width="w-[191px]" />
                  </div>
                  <Check label="Use extended X2 format (recommended)" checked className="h-[31px]" />
                  <Check label="Include netlist attributes" checked className="h-[31px]" />
                  <Check label="Disable aperture macros (not recommended)" className="h-[31px]" />
                </div>
              </div>
            </Group>
          </div>
        </div>

        <Group title="Output Messages" className="mt-[10px] pb-[9px]">
          <textarea aria-label="Output Messages" className="mt-[8px] ml-[2px] block h-[78px] w-[1041px] resize-none bg-white outline-none" />
          <div className="mt-[6px] flex items-center pr-[3px]">
            <span className="w-[46px] pb-[2px]">Show:</span>
            <Check label="All" className="w-[87px]" />
            <Check label="Errors" checked className="w-[72px]" />
            <Badge />
            <Check label="Warnings" checked className="ml-[35px] w-[96px]" />
            <Badge />
            <Check label="Actions" checked className="ml-[35px] w-[118px]" />
            <Check label="Infos" checked className="flex-1" />
            <PushButton width="w-[91px]">Save...</PushButton>
          </div>
        </Group>

        <div className="mt-[8px] flex gap-[10px] pl-[6px]">
          <PushButton width="w-[94px]">Run DRC...</PushButton>
          <span className="flex-1" />
          <PushButton width="w-[91px]" primary>Plot</PushButton>
          <PushButton width="w-[91px]">Close</PushButton>
          <PushButton width="w-[161px]">Generate Drill Files...</PushButton>
        </div>
      </div>

      <svg viewBox="0 0 11 11" className="absolute right-[2px] bottom-[2px] size-[11px]" aria-hidden="true">
        <path d="M8 0h3v3H8zM4 4h3v3H4zM8 4h3v3H8zM0 8h3v3H0zM4 8h3v3H4zM8 8h3v3H8z" fill="#bcbcbc" />
      </svg>
      <svg viewBox="0 0 90 140" className="pointer-events-none absolute top-[532px] right-[110px] h-[140px] w-[90px]" aria-hidden="true">
        <path d="M10 7C22 40 40 78 59 127" fill="none" stroke="#ffd42a" strokeWidth="11" strokeLinecap="round" />
        <path d="M12 109Q34 117 59 130 66 100 79 81" fill="none" stroke="#ffd42a" strokeWidth="11" strokeLinecap="round" strokeLinejoin="round" />
      </svg>
    </div>
  );
}

/* ---------- frame ---------- */

const status: [string, string][] = [
  ["File 'C:\\Users\\white devil\\Downloads\\Project\\Project\\demo\\_autosave-demo.kicad_pc...", "w-[584px] pl-[2px]"],
  ["Z 3.66", "w-[98px] pl-[5px]"],
  ["X 146.5000  Y 53.5000", "w-[203px] pl-[5px]"],
  ["dx 146.5000  dy 53.5000  dist 155.9631", "w-[321px] pl-[5px]"],
  ["grid 0.5000", "w-[234px] pl-[5px]"],
  ["mm", "w-[77px] pl-[5px]"],
  ["Draw Filled Zones", "w-[215px] pl-[5px]"],
];

export default function App() {
  return (
    <div className="relative flex h-screen flex-col overflow-hidden bg-[#f0f0f0] font-['Open_Sans',sans-serif] text-[14px] leading-5 text-black">
      <header className="flex h-[29px] shrink-0 items-center bg-[#f3f3f3] pl-[2px] text-[#8b8b8b]">
        <Icon size="size-[20px]">
          <Circuit />
        </Icon>
        <h1 className="ml-[7px] flex-1">*demo — PCB Editor</h1>
        <div className="flex">
          <button type="button" aria-label="Minimize" className="flex w-[58px] justify-center">
            <svg viewBox="0 0 12 12" className="size-[12px]" stroke="#777" fill="none" aria-hidden="true">
              <path d="M0 6.500h12" />
            </svg>
          </button>
          <button type="button" aria-label="Restore" className="flex w-[58px] justify-center">
            <svg viewBox="0 0 12 12" className="size-[12px]" stroke="#777" fill="none" aria-hidden="true">
              <rect x=".5" y="2.500" width="9" height="9" rx="1.500" />
              <path d="M3 .5h6.500a2 2 0 0 1 2 2V9" />
            </svg>
          </button>
          <button type="button" aria-label="Close" className="flex w-[60px] justify-center">
            <svg viewBox="0 0 12 12" className="size-[12px]" stroke="#777" fill="none" aria-hidden="true">
              <path d="m.5.5 11 11M11.500.5l-11 11" />
            </svg>
          </button>
        </div>
      </header>
      <nav className="flex h-[23px] shrink-0 items-center gap-[18px] bg-white pt-[2px] pl-[9px] text-[#6d6d6d]">
        {["File", "Edit", "View", "Place", "Route", "Inspect", "Tools", "Preferences", "Help"].map((m) => (
          <button key={m} type="button">
            {m}
          </button>
        ))}
      </nav>
      <TopToolbar />
      <OptionsToolbar />
      <div className="flex min-h-0 flex-1">
        <SideToolbar tools={leftTools} label="Display" />
        <BoardCanvas />
        <SideToolbar tools={rightTools} label="Drawing" />
        <AppearancePanel />
      </div>
      <div className="h-10 shrink-0" />
      <footer className="flex h-[25px] shrink-0 items-end border-t border-[#d4d4d4]">
        {status.map(([s, w]) => (
          <span key={s} className={`h-[24px] shrink-0 overflow-hidden border-r border-[#d7d7d7] pt-1 whitespace-pre ${w}`}>
            {s}
          </span>
        ))}
      </footer>
      <PlotDialog />
    </div>
  );
}
